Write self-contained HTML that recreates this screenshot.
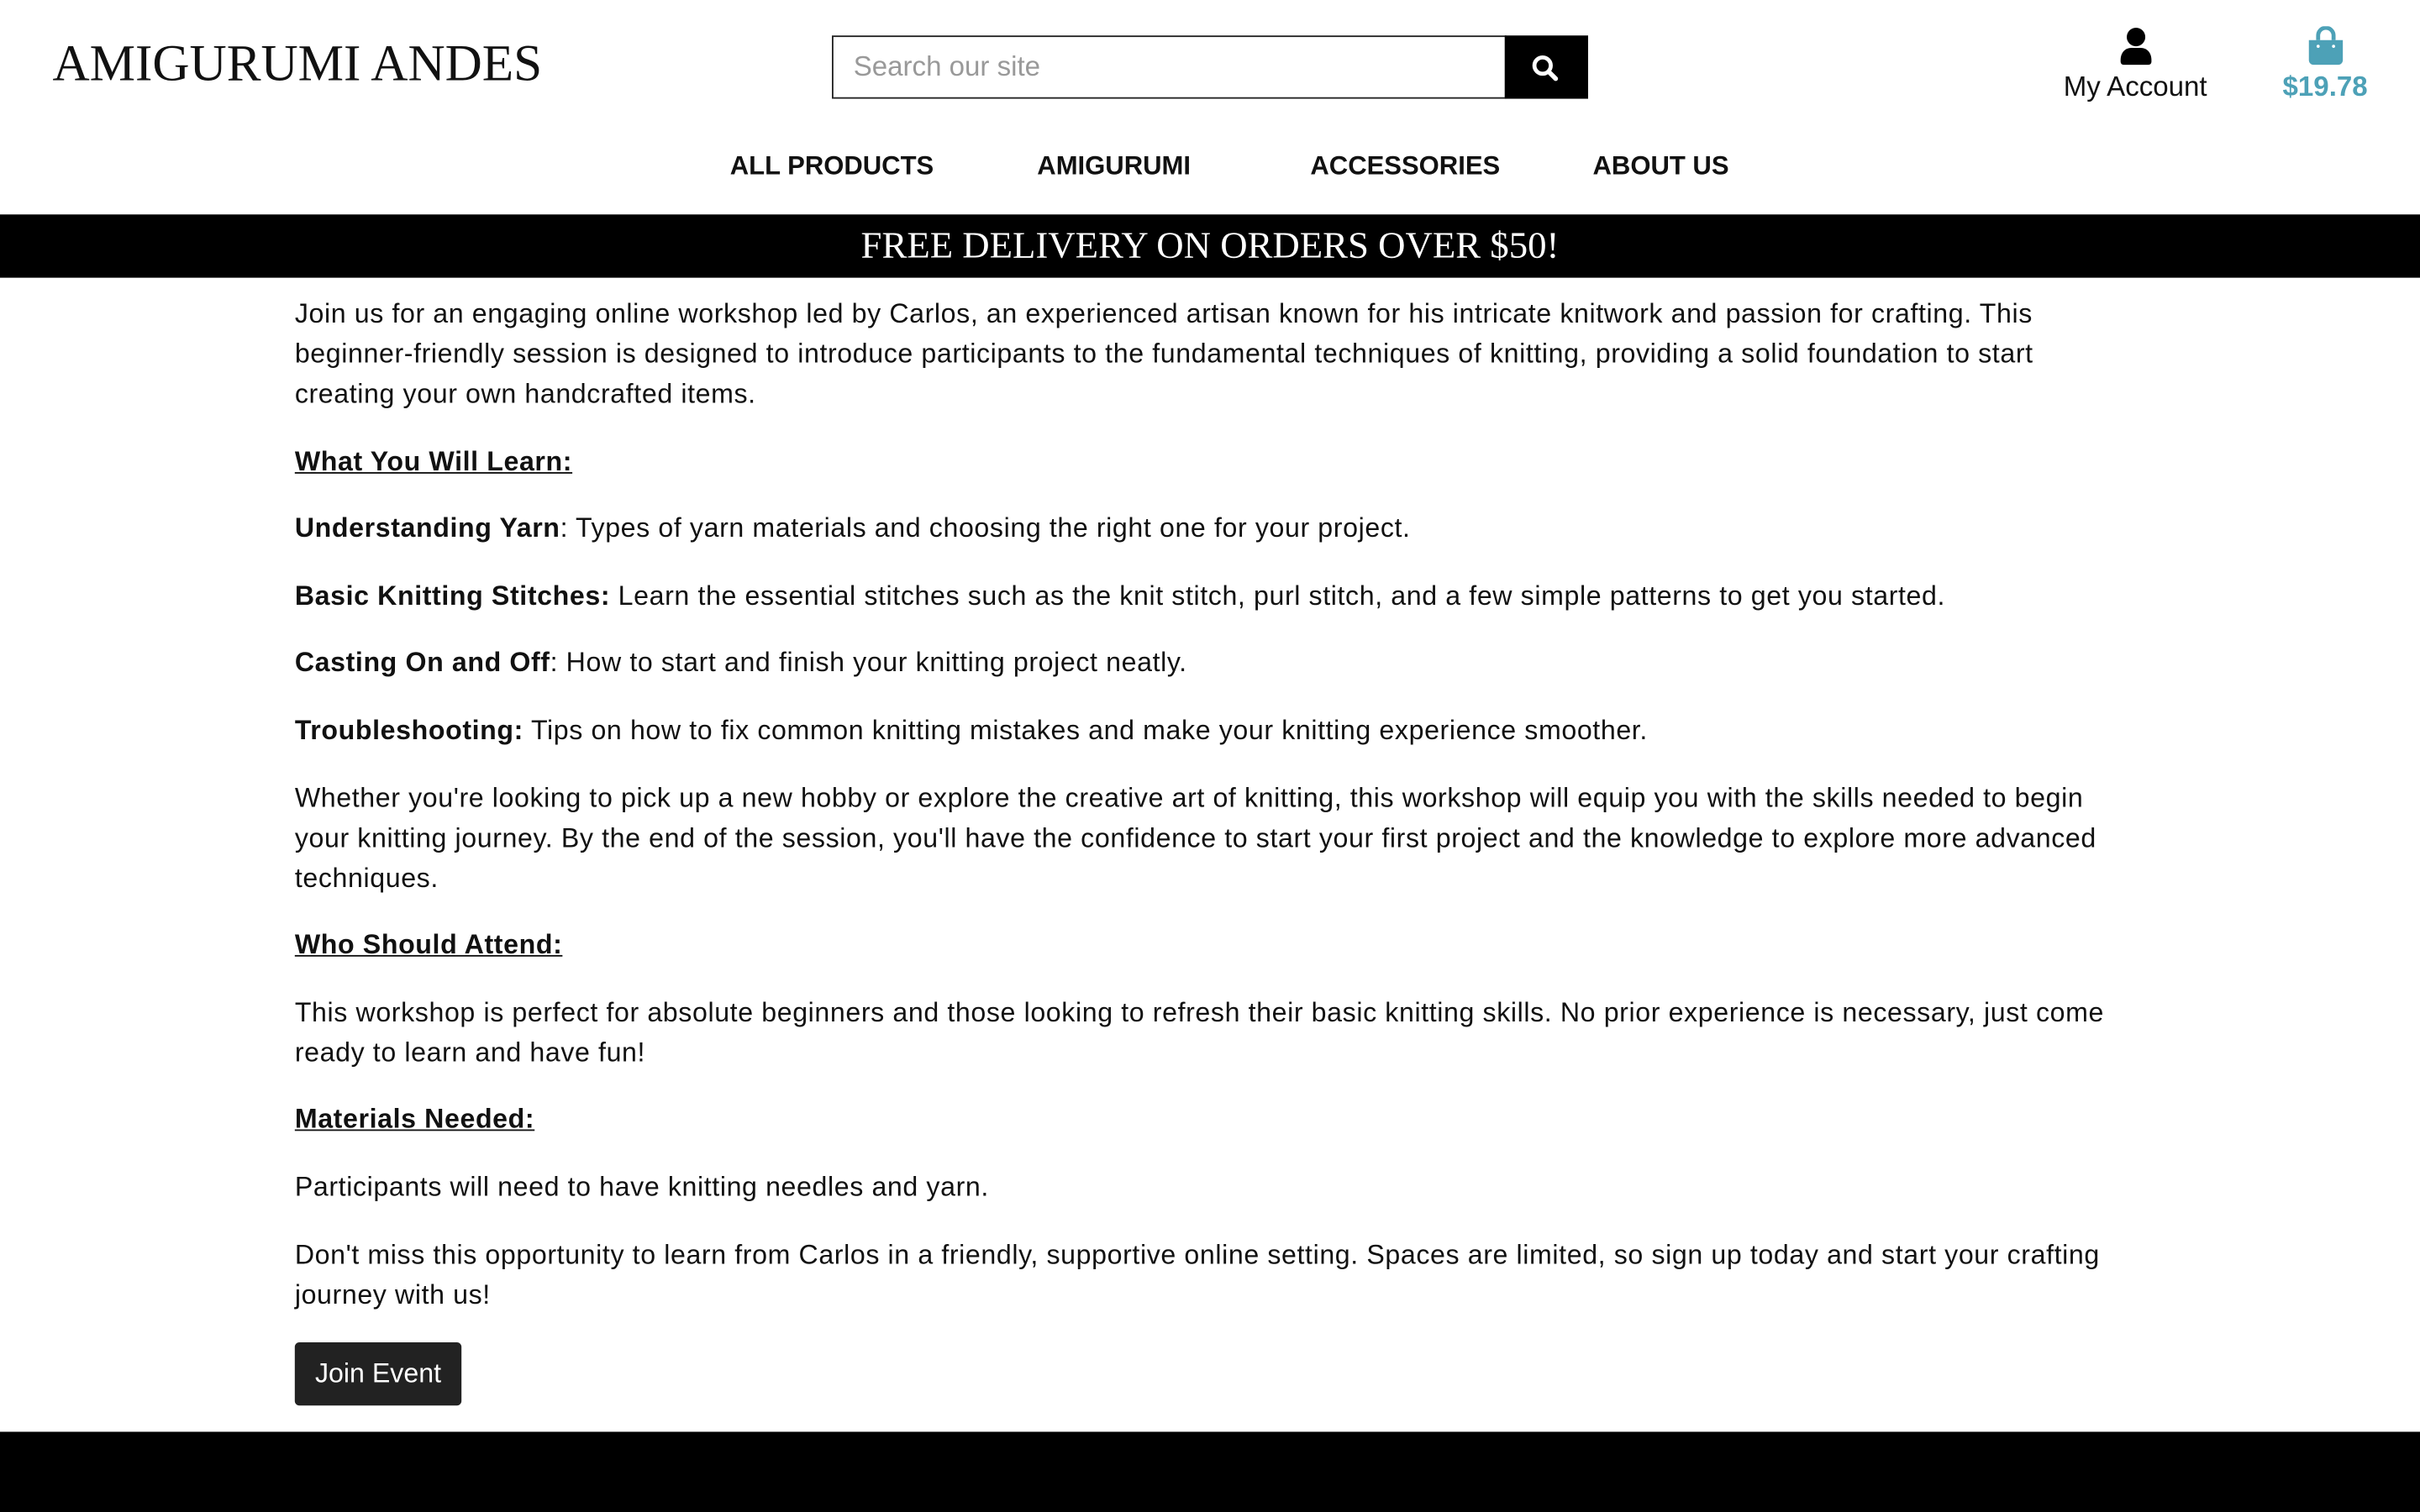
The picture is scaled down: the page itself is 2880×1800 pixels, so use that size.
<!DOCTYPE html>
<html><head><meta charset="utf-8"><style>
html,body{margin:0;padding:0;background:#fff;overflow:hidden}
body{width:2880px;height:1800px}
#w{position:relative;width:1568px;height:980px;transform:scale(1.836735);transform-origin:0 0;font-family:"Liberation Sans",sans-serif;color:#111}
.a{position:absolute;white-space:nowrap}
.p{position:absolute;left:191px;font-size:17.5px;line-height:26px;white-space:nowrap;color:#111;letter-spacing:0.33px}
.h{font-weight:bold;text-decoration:underline}
.nav{position:absolute;top:98px;font-weight:bold;font-size:16.9px;color:#111}
</style></head><body><div id="w">
<div class="a" style="left:34px;top:23px;font-family:'Liberation Serif',serif;font-size:33.3px;color:#111">AMIGURUMI ANDES</div>
<div class="a" style="left:539px;top:23px;width:435px;height:39px;border:1px solid #222;box-sizing:content-box"></div>
<div class="a" style="left:553px;top:33px;font-size:18px;color:#999">Search our site</div>
<div class="a" style="left:975px;top:23px;width:54px;height:41px;background:#000"></div>
<svg class="a" style="left:992px;top:35px" width="18" height="18" viewBox="0 0 18 18"><circle cx="7.5" cy="7.5" r="5.3" fill="none" stroke="#fff" stroke-width="2.6"/><path d="M11.5 11.5L16 16" stroke="#fff" stroke-width="3" stroke-linecap="round"/></svg>
<svg class="a" style="left:1373px;top:17px" width="22" height="26" viewBox="0 0 22 26"><circle cx="11" cy="7" r="6"/><path d="M1 22c0-5 3-8 7-8h6c4 0 7 3 7 8v1a2 2 0 0 1-2 2H3a2 2 0 0 1-2-2z"/></svg>
<div class="a" style="left:1337px;top:46px;font-size:18px;color:#111">My Account</div>
<svg class="a" style="left:1495px;top:17px" width="24" height="26" viewBox="0 0 24 26"><path d="M7 9V6a5 5 0 0 1 10 0v3" fill="none" stroke="#4da1b7" stroke-width="2.6"/><path d="M1 9h22v13a3 3 0 0 1-3 3H4a3 3 0 0 1-3-3z" fill="#4da1b7"/><circle cx="7" cy="13" r="1" fill="#fff"/><circle cx="17" cy="13" r="1" fill="#fff"/></svg>
<div class="a" style="left:1479px;top:46px;font-size:18px;font-weight:bold;color:#4da1b7">$19.78</div>
<div class="nav" style="left:473px">ALL PRODUCTS</div>
<div class="nav" style="left:672px">AMIGURUMI</div>
<div class="nav" style="left:849px">ACCESSORIES</div>
<div class="nav" style="left:1032px">ABOUT US</div>
<div class="a" style="left:0;top:139px;width:1568px;height:41px;background:#000;color:#fff;font-family:'Liberation Serif',serif;font-size:24.4px;text-align:center;line-height:41px">FREE DELIVERY ON ORDERS OVER $50!</div>
<div class="p" style="top:190px">Join us for an engaging online workshop led by Carlos, an experienced artisan known for his intricate knitwork and passion for crafting. This<br>beginner-friendly session is designed to introduce participants to the fundamental techniques of knitting, providing a solid foundation to start<br>creating your own handcrafted items.</div>
<div class="p h" style="top:286px">What You Will Learn:</div>
<div class="p" style="top:329px"><b>Understanding Yarn</b>: Types of yarn materials and choosing the right one for your project.</div>
<div class="p" style="top:373px"><b>Basic Knitting Stitches:</b> Learn the essential stitches such as the knit stitch, purl stitch, and a few simple patterns to get you started.</div>
<div class="p" style="top:416px"><b>Casting On and Off</b>: How to start and finish your knitting project neatly.</div>
<div class="p" style="top:460px"><b>Troubleshooting:</b> Tips on how to fix common knitting mistakes and make your knitting experience smoother.</div>
<div class="p" style="top:504px">Whether you're looking to pick up a new hobby or explore the creative art of knitting, this workshop will equip you with the skills needed to begin<br>your knitting journey. By the end of the session, you'll have the confidence to start your first project and the knowledge to explore more advanced<br>techniques.</div>
<div class="p h" style="top:599px">Who Should Attend:</div>
<div class="p" style="top:643px">This workshop is perfect for absolute beginners and those looking to refresh their basic knitting skills. No prior experience is necessary, just come<br>ready to learn and have fun!</div>
<div class="p h" style="top:712px">Materials Needed:</div>
<div class="p" style="top:756px">Participants will need to have knitting needles and yarn.</div>
<div class="p" style="top:800px">Don't miss this opportunity to learn from Carlos in a friendly, supportive online setting. Spaces are limited, so sign up today and start your crafting<br>journey with us!</div>
<div class="a" style="left:191px;top:870px;width:108px;height:41px;background:#222;border-radius:3px;color:#fff;font-size:17.5px;line-height:41px;text-align:center">Join Event</div>
<div class="a" style="left:0;top:928px;width:1568px;height:52px;background:#000"></div>
</div></body></html>
